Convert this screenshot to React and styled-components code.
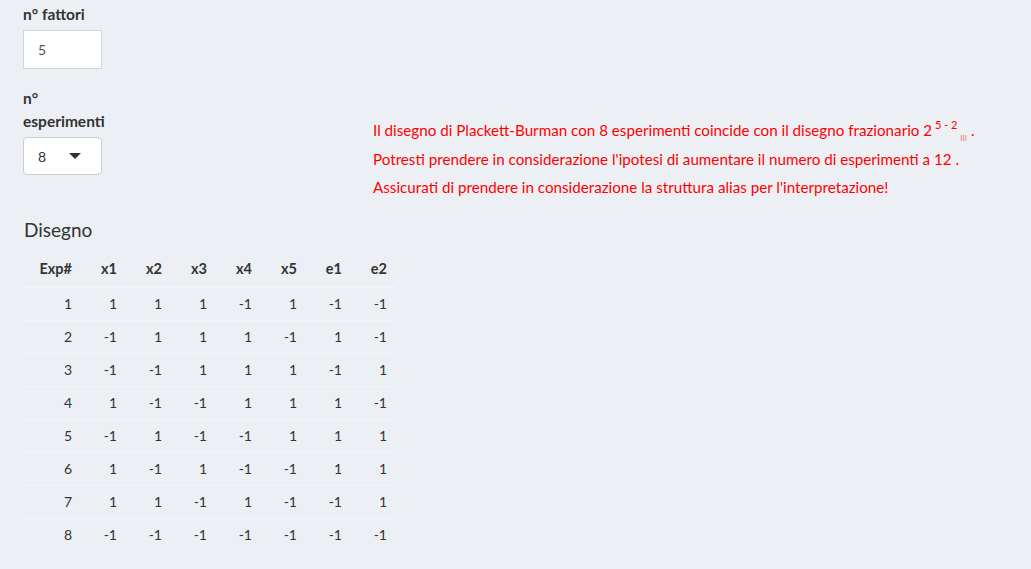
import React from "react";
import styled, { createGlobalStyle } from "styled-components";

const GlobalStyle = createGlobalStyle`
  html, body {
    margin: 0;
    padding: 0;
    background: #ecf0f5;
    font-family: "Lato", "Liberation Sans", sans-serif;
    font-size: 14px;
    color: #333;
  }
`;

const Page = styled.div`
  width: 1031px;
  height: 569px;
  box-sizing: border-box;
  padding: 3px 0 0 23px;
  overflow: hidden;
`;

const TopRow = styled.div`
  display: flex;
  align-items: flex-start;
`;

const Controls = styled.div`
  width: 79px;
  display: flex;
  flex-direction: column;
`;

const Field = styled.div`
  display: flex;
  flex-direction: column;
  margin-bottom: 18px;
`;

const Label = styled.label`
  font-weight: 700;
  font-size: 15.5px;
  line-height: 23px;
  color: #333;
  margin-bottom: 4px;
`;

const NumberBox = styled.div`
  box-sizing: border-box;
  height: 39px;
  border: 1px solid #d2d6de;
  background: #fff;
  padding: 0 14px;
  display: flex;
  align-items: center;
  color: #555;
  font-size: 14px;
`;

const SelectBox = styled.div`
  box-sizing: border-box;
  height: 38px;
  border: 1px solid #ccc;
  border-radius: 4px;
  background: #fff;
  padding: 0 20px 0 14px;
  display: flex;
  align-items: center;
  justify-content: space-between;
  color: #333;
  font-size: 14px;
`;

const Caret = styled.span`
  width: 0;
  height: 0;
  border-left: 6px solid transparent;
  border-right: 6px solid transparent;
  border-top: 6px solid #333;
`;

const Messages = styled.div`
  margin: 113px 0 0 271px;
  color: #ff0000;
  font-size: 15.2px;
  line-height: 28.5px;
`;

const Line = styled.div`
  white-space: nowrap;
`;

const Sup = styled.sup`
  font-size: 11px;
  vertical-align: 7px;
  line-height: 0;
`;

const Sub = styled.sub`
  font-size: 8px;
  vertical-align: -5px;
  line-height: 0;
  color: #ff6f6f;
`;

const Heading = styled.h3`
  margin: 16px 0 0 1px;
  font-weight: 400;
  font-size: 19px;
  line-height: 24px;
  color: #333;
`;

const Table = styled.table`
  margin-top: 10px;
  margin-left: 1px;
  border-collapse: collapse;
  font-size: 14px;
`;

const Th = styled.th`
  width: ${(p) => (p.$first ? 40 : 29)}px;
  padding: 8px;
  height: 18px;
  text-align: right;
  font-weight: 700;
  font-size: 14.5px;
  border-bottom: 2px solid #f4f4f4;
`;

const Td = styled.td`
  padding: 8px;
  height: 16px;
  line-height: 16px;
  text-align: right;
  border-top: 1px solid #f4f4f4;
  color: #333;
`;

const headers = ["Exp#", "x1", "x2", "x3", "x4", "x5", "e1", "e2"];

const rows = [
  [1, 1, 1, 1, -1, 1, -1, -1],
  [2, -1, 1, 1, 1, -1, 1, -1],
  [3, -1, -1, 1, 1, 1, -1, 1],
  [4, 1, -1, -1, 1, 1, 1, -1],
  [5, -1, 1, -1, -1, 1, 1, 1],
  [6, 1, -1, 1, -1, -1, 1, 1],
  [7, 1, 1, -1, 1, -1, -1, 1],
  [8, -1, -1, -1, -1, -1, -1, -1],
];

export default function App() {
  return (
    <>
      <GlobalStyle />
      <Page>
        <TopRow>
          <Controls>
            <Field>
              <Label>n° fattori</Label>
              <NumberBox>5</NumberBox>
            </Field>
            <Field>
              <Label>n° esperimenti</Label>
              <SelectBox>
                8 <Caret />
              </SelectBox>
            </Field>
          </Controls>
          <Messages>
            <Line>
              Il disegno di Plackett-Burman con 8 esperimenti coincide con il disegno frazionario 2
              <Sup> 5 - 2 </Sup>
              <Sub>III</Sub> .
            </Line>
            <Line>Potresti prendere in considerazione l'ipotesi di aumentare il numero di esperimenti a 12 .</Line>
            <Line>Assicurati di prendere in considerazione la struttura alias per l'interpretazione!</Line>
          </Messages>
        </TopRow>
        <Heading>Disegno</Heading>
        <Table>
          <thead>
            <tr>
              {headers.map((h, i) => (
                <Th key={h} $first={i === 0}>
                  {h}
                </Th>
              ))}
            </tr>
          </thead>
          <tbody>
            {rows.map((r) => (
              <tr key={r[0]}>
                {r.map((v, i) => (
                  <Td key={i}>{v}</Td>
                ))}
              </tr>
            ))}
          </tbody>
        </Table>
      </Page>
    </>
  );
}
